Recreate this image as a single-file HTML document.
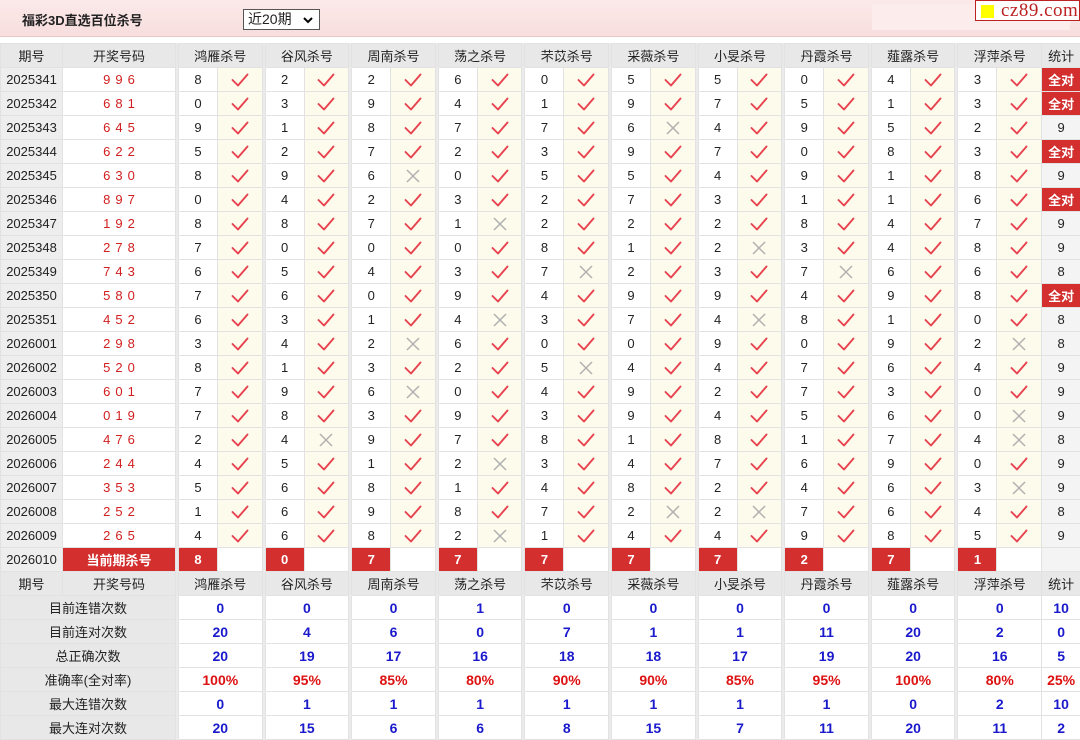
<!DOCTYPE html>
<html><head><meta charset="utf-8">
<style>
*{margin:0;padding:0;box-sizing:border-box}
body{width:1080px;height:740px;background:#fff;font-family:"Liberation Sans","Noto Sans CJK SC",sans-serif;font-size:13px;color:#222;overflow:hidden;position:relative}
.top{position:absolute;left:0;top:0;width:1080px;height:37px;background:linear-gradient(#fbe9e9,#f8dede);border-bottom:1px solid #e6c8c8}
.top .inner{position:absolute;left:872px;top:4px;width:198px;height:26px;background:#fcecec}
.title{position:absolute;left:22px;top:10px;font-weight:bold;font-size:13px;color:#222}
.sel{position:absolute;left:243px;top:9px;width:77px;height:21px;border:1px solid #555;background:#fff;font-size:14px;padding-left:4px;line-height:19px}
.sel svg{position:absolute;right:6px;top:6px}
.logo{position:absolute;left:975px;top:0;width:105px;height:21px;border:1px solid #b22;background:#fff;font-family:"Liberation Serif",serif;font-size:19px;color:#b22;line-height:19px;padding-left:25px;letter-spacing:0.5px}
.logo i{position:absolute;left:5px;top:4px;width:13px;height:13px;background:#ff0}
table{position:absolute;left:0;top:43px;width:1080px;border-collapse:collapse;table-layout:fixed}
td{height:24px;border:1px solid #e2e2e2;text-align:center;padding:0;white-space:nowrap;overflow:hidden}
tr.h td{background:#e8e8e8;font-size:13px}
td.s{background:#ebebeb;border-top-color:#ebebeb;border-bottom-color:#ebebeb}
td.p{background:#eeeeee}
td.k{color:#d21e1e;letter-spacing:5px;padding-left:5px}
td.c{background:#fdfbec}
td.t{background:#f4f4f4}
td.q{background:#d32f2f;color:#fff;font-weight:bold}
td.l{background:#e8e8e8}
td.b{color:#1a1acc;font-weight:bold;font-size:14px}
td.r{color:#dd1111;font-weight:bold;font-size:14px}
svg.v,svg.x{display:block;margin:0 auto}
</style></head><body>
<svg width="0" height="0" style="position:absolute">
<defs>
<symbol id="ck" viewBox="0 0 20 16"><path d="M2.5 8 L8 13.5 L17.5 2.5" fill="none" stroke="#e8424f" stroke-width="1.9" stroke-linecap="round" stroke-linejoin="round"/></symbol>
<symbol id="xx" viewBox="0 0 16 16"><path d="M2 2 L14 14 M14 2 L2 14" fill="none" stroke="#b0b0b0" stroke-width="1.5"/></symbol>
</defs></svg>
<div class="top"><div class="inner"></div></div>
<div class="title">福彩3D直选百位杀号</div>
<div class="sel">近20期<svg width="10" height="8" viewBox="0 0 10 8"><path d="M1 2 L5 6 L9 2" fill="none" stroke="#000" stroke-width="2"/></svg></div>
<div class="logo"><i></i>cz89.com</div>
<table>
<colgroup><col style="width:62px"><col style="width:113px">
<col style="width:3px"><col style="width:39px"><col style="width:44.6px">
<col style="width:3px"><col style="width:39px"><col style="width:44.6px">
<col style="width:3px"><col style="width:39px"><col style="width:44.6px">
<col style="width:3px"><col style="width:39px"><col style="width:44.6px">
<col style="width:3px"><col style="width:39px"><col style="width:44.6px">
<col style="width:3px"><col style="width:39px"><col style="width:44.6px">
<col style="width:3px"><col style="width:39px"><col style="width:44.6px">
<col style="width:3px"><col style="width:39px"><col style="width:44.6px">
<col style="width:3px"><col style="width:39px"><col style="width:44.6px">
<col style="width:3px"><col style="width:39px"><col style="width:44.6px">
<col style="width:39px"></colgroup>
<tr class="h"><td>期号</td><td>开奖号码</td><td class="s"></td><td colspan="2">鸿雁杀号</td><td class="s"></td><td colspan="2">谷风杀号</td><td class="s"></td><td colspan="2">周南杀号</td><td class="s"></td><td colspan="2">荡之杀号</td><td class="s"></td><td colspan="2">芣苡杀号</td><td class="s"></td><td colspan="2">采薇杀号</td><td class="s"></td><td colspan="2">小旻杀号</td><td class="s"></td><td colspan="2">丹霞杀号</td><td class="s"></td><td colspan="2">薤露杀号</td><td class="s"></td><td colspan="2">浮萍杀号</td><td>统计</td></tr>
<tr><td class="p">2025341</td><td class="k">996</td><td class="s"></td><td>8</td><td class="c"><svg class="v" width="20" height="16"><use href="#ck"/></svg></td><td class="s"></td><td>2</td><td class="c"><svg class="v" width="20" height="16"><use href="#ck"/></svg></td><td class="s"></td><td>2</td><td class="c"><svg class="v" width="20" height="16"><use href="#ck"/></svg></td><td class="s"></td><td>6</td><td class="c"><svg class="v" width="20" height="16"><use href="#ck"/></svg></td><td class="s"></td><td>0</td><td class="c"><svg class="v" width="20" height="16"><use href="#ck"/></svg></td><td class="s"></td><td>5</td><td class="c"><svg class="v" width="20" height="16"><use href="#ck"/></svg></td><td class="s"></td><td>5</td><td class="c"><svg class="v" width="20" height="16"><use href="#ck"/></svg></td><td class="s"></td><td>0</td><td class="c"><svg class="v" width="20" height="16"><use href="#ck"/></svg></td><td class="s"></td><td>4</td><td class="c"><svg class="v" width="20" height="16"><use href="#ck"/></svg></td><td class="s"></td><td>3</td><td class="c"><svg class="v" width="20" height="16"><use href="#ck"/></svg></td><td class="q">全对</td></tr>
<tr><td class="p">2025342</td><td class="k">681</td><td class="s"></td><td>0</td><td class="c"><svg class="v" width="20" height="16"><use href="#ck"/></svg></td><td class="s"></td><td>3</td><td class="c"><svg class="v" width="20" height="16"><use href="#ck"/></svg></td><td class="s"></td><td>9</td><td class="c"><svg class="v" width="20" height="16"><use href="#ck"/></svg></td><td class="s"></td><td>4</td><td class="c"><svg class="v" width="20" height="16"><use href="#ck"/></svg></td><td class="s"></td><td>1</td><td class="c"><svg class="v" width="20" height="16"><use href="#ck"/></svg></td><td class="s"></td><td>9</td><td class="c"><svg class="v" width="20" height="16"><use href="#ck"/></svg></td><td class="s"></td><td>7</td><td class="c"><svg class="v" width="20" height="16"><use href="#ck"/></svg></td><td class="s"></td><td>5</td><td class="c"><svg class="v" width="20" height="16"><use href="#ck"/></svg></td><td class="s"></td><td>1</td><td class="c"><svg class="v" width="20" height="16"><use href="#ck"/></svg></td><td class="s"></td><td>3</td><td class="c"><svg class="v" width="20" height="16"><use href="#ck"/></svg></td><td class="q">全对</td></tr>
<tr><td class="p">2025343</td><td class="k">645</td><td class="s"></td><td>9</td><td class="c"><svg class="v" width="20" height="16"><use href="#ck"/></svg></td><td class="s"></td><td>1</td><td class="c"><svg class="v" width="20" height="16"><use href="#ck"/></svg></td><td class="s"></td><td>8</td><td class="c"><svg class="v" width="20" height="16"><use href="#ck"/></svg></td><td class="s"></td><td>7</td><td class="c"><svg class="v" width="20" height="16"><use href="#ck"/></svg></td><td class="s"></td><td>7</td><td class="c"><svg class="v" width="20" height="16"><use href="#ck"/></svg></td><td class="s"></td><td>6</td><td class="c"><svg class="x" width="16" height="16"><use href="#xx"/></svg></td><td class="s"></td><td>4</td><td class="c"><svg class="v" width="20" height="16"><use href="#ck"/></svg></td><td class="s"></td><td>9</td><td class="c"><svg class="v" width="20" height="16"><use href="#ck"/></svg></td><td class="s"></td><td>5</td><td class="c"><svg class="v" width="20" height="16"><use href="#ck"/></svg></td><td class="s"></td><td>2</td><td class="c"><svg class="v" width="20" height="16"><use href="#ck"/></svg></td><td class="t">9</td></tr>
<tr><td class="p">2025344</td><td class="k">622</td><td class="s"></td><td>5</td><td class="c"><svg class="v" width="20" height="16"><use href="#ck"/></svg></td><td class="s"></td><td>2</td><td class="c"><svg class="v" width="20" height="16"><use href="#ck"/></svg></td><td class="s"></td><td>7</td><td class="c"><svg class="v" width="20" height="16"><use href="#ck"/></svg></td><td class="s"></td><td>2</td><td class="c"><svg class="v" width="20" height="16"><use href="#ck"/></svg></td><td class="s"></td><td>3</td><td class="c"><svg class="v" width="20" height="16"><use href="#ck"/></svg></td><td class="s"></td><td>9</td><td class="c"><svg class="v" width="20" height="16"><use href="#ck"/></svg></td><td class="s"></td><td>7</td><td class="c"><svg class="v" width="20" height="16"><use href="#ck"/></svg></td><td class="s"></td><td>0</td><td class="c"><svg class="v" width="20" height="16"><use href="#ck"/></svg></td><td class="s"></td><td>8</td><td class="c"><svg class="v" width="20" height="16"><use href="#ck"/></svg></td><td class="s"></td><td>3</td><td class="c"><svg class="v" width="20" height="16"><use href="#ck"/></svg></td><td class="q">全对</td></tr>
<tr><td class="p">2025345</td><td class="k">630</td><td class="s"></td><td>8</td><td class="c"><svg class="v" width="20" height="16"><use href="#ck"/></svg></td><td class="s"></td><td>9</td><td class="c"><svg class="v" width="20" height="16"><use href="#ck"/></svg></td><td class="s"></td><td>6</td><td class="c"><svg class="x" width="16" height="16"><use href="#xx"/></svg></td><td class="s"></td><td>0</td><td class="c"><svg class="v" width="20" height="16"><use href="#ck"/></svg></td><td class="s"></td><td>5</td><td class="c"><svg class="v" width="20" height="16"><use href="#ck"/></svg></td><td class="s"></td><td>5</td><td class="c"><svg class="v" width="20" height="16"><use href="#ck"/></svg></td><td class="s"></td><td>4</td><td class="c"><svg class="v" width="20" height="16"><use href="#ck"/></svg></td><td class="s"></td><td>9</td><td class="c"><svg class="v" width="20" height="16"><use href="#ck"/></svg></td><td class="s"></td><td>1</td><td class="c"><svg class="v" width="20" height="16"><use href="#ck"/></svg></td><td class="s"></td><td>8</td><td class="c"><svg class="v" width="20" height="16"><use href="#ck"/></svg></td><td class="t">9</td></tr>
<tr><td class="p">2025346</td><td class="k">897</td><td class="s"></td><td>0</td><td class="c"><svg class="v" width="20" height="16"><use href="#ck"/></svg></td><td class="s"></td><td>4</td><td class="c"><svg class="v" width="20" height="16"><use href="#ck"/></svg></td><td class="s"></td><td>2</td><td class="c"><svg class="v" width="20" height="16"><use href="#ck"/></svg></td><td class="s"></td><td>3</td><td class="c"><svg class="v" width="20" height="16"><use href="#ck"/></svg></td><td class="s"></td><td>2</td><td class="c"><svg class="v" width="20" height="16"><use href="#ck"/></svg></td><td class="s"></td><td>7</td><td class="c"><svg class="v" width="20" height="16"><use href="#ck"/></svg></td><td class="s"></td><td>3</td><td class="c"><svg class="v" width="20" height="16"><use href="#ck"/></svg></td><td class="s"></td><td>1</td><td class="c"><svg class="v" width="20" height="16"><use href="#ck"/></svg></td><td class="s"></td><td>1</td><td class="c"><svg class="v" width="20" height="16"><use href="#ck"/></svg></td><td class="s"></td><td>6</td><td class="c"><svg class="v" width="20" height="16"><use href="#ck"/></svg></td><td class="q">全对</td></tr>
<tr><td class="p">2025347</td><td class="k">192</td><td class="s"></td><td>8</td><td class="c"><svg class="v" width="20" height="16"><use href="#ck"/></svg></td><td class="s"></td><td>8</td><td class="c"><svg class="v" width="20" height="16"><use href="#ck"/></svg></td><td class="s"></td><td>7</td><td class="c"><svg class="v" width="20" height="16"><use href="#ck"/></svg></td><td class="s"></td><td>1</td><td class="c"><svg class="x" width="16" height="16"><use href="#xx"/></svg></td><td class="s"></td><td>2</td><td class="c"><svg class="v" width="20" height="16"><use href="#ck"/></svg></td><td class="s"></td><td>2</td><td class="c"><svg class="v" width="20" height="16"><use href="#ck"/></svg></td><td class="s"></td><td>2</td><td class="c"><svg class="v" width="20" height="16"><use href="#ck"/></svg></td><td class="s"></td><td>8</td><td class="c"><svg class="v" width="20" height="16"><use href="#ck"/></svg></td><td class="s"></td><td>4</td><td class="c"><svg class="v" width="20" height="16"><use href="#ck"/></svg></td><td class="s"></td><td>7</td><td class="c"><svg class="v" width="20" height="16"><use href="#ck"/></svg></td><td class="t">9</td></tr>
<tr><td class="p">2025348</td><td class="k">278</td><td class="s"></td><td>7</td><td class="c"><svg class="v" width="20" height="16"><use href="#ck"/></svg></td><td class="s"></td><td>0</td><td class="c"><svg class="v" width="20" height="16"><use href="#ck"/></svg></td><td class="s"></td><td>0</td><td class="c"><svg class="v" width="20" height="16"><use href="#ck"/></svg></td><td class="s"></td><td>0</td><td class="c"><svg class="v" width="20" height="16"><use href="#ck"/></svg></td><td class="s"></td><td>8</td><td class="c"><svg class="v" width="20" height="16"><use href="#ck"/></svg></td><td class="s"></td><td>1</td><td class="c"><svg class="v" width="20" height="16"><use href="#ck"/></svg></td><td class="s"></td><td>2</td><td class="c"><svg class="x" width="16" height="16"><use href="#xx"/></svg></td><td class="s"></td><td>3</td><td class="c"><svg class="v" width="20" height="16"><use href="#ck"/></svg></td><td class="s"></td><td>4</td><td class="c"><svg class="v" width="20" height="16"><use href="#ck"/></svg></td><td class="s"></td><td>8</td><td class="c"><svg class="v" width="20" height="16"><use href="#ck"/></svg></td><td class="t">9</td></tr>
<tr><td class="p">2025349</td><td class="k">743</td><td class="s"></td><td>6</td><td class="c"><svg class="v" width="20" height="16"><use href="#ck"/></svg></td><td class="s"></td><td>5</td><td class="c"><svg class="v" width="20" height="16"><use href="#ck"/></svg></td><td class="s"></td><td>4</td><td class="c"><svg class="v" width="20" height="16"><use href="#ck"/></svg></td><td class="s"></td><td>3</td><td class="c"><svg class="v" width="20" height="16"><use href="#ck"/></svg></td><td class="s"></td><td>7</td><td class="c"><svg class="x" width="16" height="16"><use href="#xx"/></svg></td><td class="s"></td><td>2</td><td class="c"><svg class="v" width="20" height="16"><use href="#ck"/></svg></td><td class="s"></td><td>3</td><td class="c"><svg class="v" width="20" height="16"><use href="#ck"/></svg></td><td class="s"></td><td>7</td><td class="c"><svg class="x" width="16" height="16"><use href="#xx"/></svg></td><td class="s"></td><td>6</td><td class="c"><svg class="v" width="20" height="16"><use href="#ck"/></svg></td><td class="s"></td><td>6</td><td class="c"><svg class="v" width="20" height="16"><use href="#ck"/></svg></td><td class="t">8</td></tr>
<tr><td class="p">2025350</td><td class="k">580</td><td class="s"></td><td>7</td><td class="c"><svg class="v" width="20" height="16"><use href="#ck"/></svg></td><td class="s"></td><td>6</td><td class="c"><svg class="v" width="20" height="16"><use href="#ck"/></svg></td><td class="s"></td><td>0</td><td class="c"><svg class="v" width="20" height="16"><use href="#ck"/></svg></td><td class="s"></td><td>9</td><td class="c"><svg class="v" width="20" height="16"><use href="#ck"/></svg></td><td class="s"></td><td>4</td><td class="c"><svg class="v" width="20" height="16"><use href="#ck"/></svg></td><td class="s"></td><td>9</td><td class="c"><svg class="v" width="20" height="16"><use href="#ck"/></svg></td><td class="s"></td><td>9</td><td class="c"><svg class="v" width="20" height="16"><use href="#ck"/></svg></td><td class="s"></td><td>4</td><td class="c"><svg class="v" width="20" height="16"><use href="#ck"/></svg></td><td class="s"></td><td>9</td><td class="c"><svg class="v" width="20" height="16"><use href="#ck"/></svg></td><td class="s"></td><td>8</td><td class="c"><svg class="v" width="20" height="16"><use href="#ck"/></svg></td><td class="q">全对</td></tr>
<tr><td class="p">2025351</td><td class="k">452</td><td class="s"></td><td>6</td><td class="c"><svg class="v" width="20" height="16"><use href="#ck"/></svg></td><td class="s"></td><td>3</td><td class="c"><svg class="v" width="20" height="16"><use href="#ck"/></svg></td><td class="s"></td><td>1</td><td class="c"><svg class="v" width="20" height="16"><use href="#ck"/></svg></td><td class="s"></td><td>4</td><td class="c"><svg class="x" width="16" height="16"><use href="#xx"/></svg></td><td class="s"></td><td>3</td><td class="c"><svg class="v" width="20" height="16"><use href="#ck"/></svg></td><td class="s"></td><td>7</td><td class="c"><svg class="v" width="20" height="16"><use href="#ck"/></svg></td><td class="s"></td><td>4</td><td class="c"><svg class="x" width="16" height="16"><use href="#xx"/></svg></td><td class="s"></td><td>8</td><td class="c"><svg class="v" width="20" height="16"><use href="#ck"/></svg></td><td class="s"></td><td>1</td><td class="c"><svg class="v" width="20" height="16"><use href="#ck"/></svg></td><td class="s"></td><td>0</td><td class="c"><svg class="v" width="20" height="16"><use href="#ck"/></svg></td><td class="t">8</td></tr>
<tr><td class="p">2026001</td><td class="k">298</td><td class="s"></td><td>3</td><td class="c"><svg class="v" width="20" height="16"><use href="#ck"/></svg></td><td class="s"></td><td>4</td><td class="c"><svg class="v" width="20" height="16"><use href="#ck"/></svg></td><td class="s"></td><td>2</td><td class="c"><svg class="x" width="16" height="16"><use href="#xx"/></svg></td><td class="s"></td><td>6</td><td class="c"><svg class="v" width="20" height="16"><use href="#ck"/></svg></td><td class="s"></td><td>0</td><td class="c"><svg class="v" width="20" height="16"><use href="#ck"/></svg></td><td class="s"></td><td>0</td><td class="c"><svg class="v" width="20" height="16"><use href="#ck"/></svg></td><td class="s"></td><td>9</td><td class="c"><svg class="v" width="20" height="16"><use href="#ck"/></svg></td><td class="s"></td><td>0</td><td class="c"><svg class="v" width="20" height="16"><use href="#ck"/></svg></td><td class="s"></td><td>9</td><td class="c"><svg class="v" width="20" height="16"><use href="#ck"/></svg></td><td class="s"></td><td>2</td><td class="c"><svg class="x" width="16" height="16"><use href="#xx"/></svg></td><td class="t">8</td></tr>
<tr><td class="p">2026002</td><td class="k">520</td><td class="s"></td><td>8</td><td class="c"><svg class="v" width="20" height="16"><use href="#ck"/></svg></td><td class="s"></td><td>1</td><td class="c"><svg class="v" width="20" height="16"><use href="#ck"/></svg></td><td class="s"></td><td>3</td><td class="c"><svg class="v" width="20" height="16"><use href="#ck"/></svg></td><td class="s"></td><td>2</td><td class="c"><svg class="v" width="20" height="16"><use href="#ck"/></svg></td><td class="s"></td><td>5</td><td class="c"><svg class="x" width="16" height="16"><use href="#xx"/></svg></td><td class="s"></td><td>4</td><td class="c"><svg class="v" width="20" height="16"><use href="#ck"/></svg></td><td class="s"></td><td>4</td><td class="c"><svg class="v" width="20" height="16"><use href="#ck"/></svg></td><td class="s"></td><td>7</td><td class="c"><svg class="v" width="20" height="16"><use href="#ck"/></svg></td><td class="s"></td><td>6</td><td class="c"><svg class="v" width="20" height="16"><use href="#ck"/></svg></td><td class="s"></td><td>4</td><td class="c"><svg class="v" width="20" height="16"><use href="#ck"/></svg></td><td class="t">9</td></tr>
<tr><td class="p">2026003</td><td class="k">601</td><td class="s"></td><td>7</td><td class="c"><svg class="v" width="20" height="16"><use href="#ck"/></svg></td><td class="s"></td><td>9</td><td class="c"><svg class="v" width="20" height="16"><use href="#ck"/></svg></td><td class="s"></td><td>6</td><td class="c"><svg class="x" width="16" height="16"><use href="#xx"/></svg></td><td class="s"></td><td>0</td><td class="c"><svg class="v" width="20" height="16"><use href="#ck"/></svg></td><td class="s"></td><td>4</td><td class="c"><svg class="v" width="20" height="16"><use href="#ck"/></svg></td><td class="s"></td><td>9</td><td class="c"><svg class="v" width="20" height="16"><use href="#ck"/></svg></td><td class="s"></td><td>2</td><td class="c"><svg class="v" width="20" height="16"><use href="#ck"/></svg></td><td class="s"></td><td>7</td><td class="c"><svg class="v" width="20" height="16"><use href="#ck"/></svg></td><td class="s"></td><td>3</td><td class="c"><svg class="v" width="20" height="16"><use href="#ck"/></svg></td><td class="s"></td><td>0</td><td class="c"><svg class="v" width="20" height="16"><use href="#ck"/></svg></td><td class="t">9</td></tr>
<tr><td class="p">2026004</td><td class="k">019</td><td class="s"></td><td>7</td><td class="c"><svg class="v" width="20" height="16"><use href="#ck"/></svg></td><td class="s"></td><td>8</td><td class="c"><svg class="v" width="20" height="16"><use href="#ck"/></svg></td><td class="s"></td><td>3</td><td class="c"><svg class="v" width="20" height="16"><use href="#ck"/></svg></td><td class="s"></td><td>9</td><td class="c"><svg class="v" width="20" height="16"><use href="#ck"/></svg></td><td class="s"></td><td>3</td><td class="c"><svg class="v" width="20" height="16"><use href="#ck"/></svg></td><td class="s"></td><td>9</td><td class="c"><svg class="v" width="20" height="16"><use href="#ck"/></svg></td><td class="s"></td><td>4</td><td class="c"><svg class="v" width="20" height="16"><use href="#ck"/></svg></td><td class="s"></td><td>5</td><td class="c"><svg class="v" width="20" height="16"><use href="#ck"/></svg></td><td class="s"></td><td>6</td><td class="c"><svg class="v" width="20" height="16"><use href="#ck"/></svg></td><td class="s"></td><td>0</td><td class="c"><svg class="x" width="16" height="16"><use href="#xx"/></svg></td><td class="t">9</td></tr>
<tr><td class="p">2026005</td><td class="k">476</td><td class="s"></td><td>2</td><td class="c"><svg class="v" width="20" height="16"><use href="#ck"/></svg></td><td class="s"></td><td>4</td><td class="c"><svg class="x" width="16" height="16"><use href="#xx"/></svg></td><td class="s"></td><td>9</td><td class="c"><svg class="v" width="20" height="16"><use href="#ck"/></svg></td><td class="s"></td><td>7</td><td class="c"><svg class="v" width="20" height="16"><use href="#ck"/></svg></td><td class="s"></td><td>8</td><td class="c"><svg class="v" width="20" height="16"><use href="#ck"/></svg></td><td class="s"></td><td>1</td><td class="c"><svg class="v" width="20" height="16"><use href="#ck"/></svg></td><td class="s"></td><td>8</td><td class="c"><svg class="v" width="20" height="16"><use href="#ck"/></svg></td><td class="s"></td><td>1</td><td class="c"><svg class="v" width="20" height="16"><use href="#ck"/></svg></td><td class="s"></td><td>7</td><td class="c"><svg class="v" width="20" height="16"><use href="#ck"/></svg></td><td class="s"></td><td>4</td><td class="c"><svg class="x" width="16" height="16"><use href="#xx"/></svg></td><td class="t">8</td></tr>
<tr><td class="p">2026006</td><td class="k">244</td><td class="s"></td><td>4</td><td class="c"><svg class="v" width="20" height="16"><use href="#ck"/></svg></td><td class="s"></td><td>5</td><td class="c"><svg class="v" width="20" height="16"><use href="#ck"/></svg></td><td class="s"></td><td>1</td><td class="c"><svg class="v" width="20" height="16"><use href="#ck"/></svg></td><td class="s"></td><td>2</td><td class="c"><svg class="x" width="16" height="16"><use href="#xx"/></svg></td><td class="s"></td><td>3</td><td class="c"><svg class="v" width="20" height="16"><use href="#ck"/></svg></td><td class="s"></td><td>4</td><td class="c"><svg class="v" width="20" height="16"><use href="#ck"/></svg></td><td class="s"></td><td>7</td><td class="c"><svg class="v" width="20" height="16"><use href="#ck"/></svg></td><td class="s"></td><td>6</td><td class="c"><svg class="v" width="20" height="16"><use href="#ck"/></svg></td><td class="s"></td><td>9</td><td class="c"><svg class="v" width="20" height="16"><use href="#ck"/></svg></td><td class="s"></td><td>0</td><td class="c"><svg class="v" width="20" height="16"><use href="#ck"/></svg></td><td class="t">9</td></tr>
<tr><td class="p">2026007</td><td class="k">353</td><td class="s"></td><td>5</td><td class="c"><svg class="v" width="20" height="16"><use href="#ck"/></svg></td><td class="s"></td><td>6</td><td class="c"><svg class="v" width="20" height="16"><use href="#ck"/></svg></td><td class="s"></td><td>8</td><td class="c"><svg class="v" width="20" height="16"><use href="#ck"/></svg></td><td class="s"></td><td>1</td><td class="c"><svg class="v" width="20" height="16"><use href="#ck"/></svg></td><td class="s"></td><td>4</td><td class="c"><svg class="v" width="20" height="16"><use href="#ck"/></svg></td><td class="s"></td><td>8</td><td class="c"><svg class="v" width="20" height="16"><use href="#ck"/></svg></td><td class="s"></td><td>2</td><td class="c"><svg class="v" width="20" height="16"><use href="#ck"/></svg></td><td class="s"></td><td>4</td><td class="c"><svg class="v" width="20" height="16"><use href="#ck"/></svg></td><td class="s"></td><td>6</td><td class="c"><svg class="v" width="20" height="16"><use href="#ck"/></svg></td><td class="s"></td><td>3</td><td class="c"><svg class="x" width="16" height="16"><use href="#xx"/></svg></td><td class="t">9</td></tr>
<tr><td class="p">2026008</td><td class="k">252</td><td class="s"></td><td>1</td><td class="c"><svg class="v" width="20" height="16"><use href="#ck"/></svg></td><td class="s"></td><td>6</td><td class="c"><svg class="v" width="20" height="16"><use href="#ck"/></svg></td><td class="s"></td><td>9</td><td class="c"><svg class="v" width="20" height="16"><use href="#ck"/></svg></td><td class="s"></td><td>8</td><td class="c"><svg class="v" width="20" height="16"><use href="#ck"/></svg></td><td class="s"></td><td>7</td><td class="c"><svg class="v" width="20" height="16"><use href="#ck"/></svg></td><td class="s"></td><td>2</td><td class="c"><svg class="x" width="16" height="16"><use href="#xx"/></svg></td><td class="s"></td><td>2</td><td class="c"><svg class="x" width="16" height="16"><use href="#xx"/></svg></td><td class="s"></td><td>7</td><td class="c"><svg class="v" width="20" height="16"><use href="#ck"/></svg></td><td class="s"></td><td>6</td><td class="c"><svg class="v" width="20" height="16"><use href="#ck"/></svg></td><td class="s"></td><td>4</td><td class="c"><svg class="v" width="20" height="16"><use href="#ck"/></svg></td><td class="t">8</td></tr>
<tr><td class="p">2026009</td><td class="k">265</td><td class="s"></td><td>4</td><td class="c"><svg class="v" width="20" height="16"><use href="#ck"/></svg></td><td class="s"></td><td>6</td><td class="c"><svg class="v" width="20" height="16"><use href="#ck"/></svg></td><td class="s"></td><td>8</td><td class="c"><svg class="v" width="20" height="16"><use href="#ck"/></svg></td><td class="s"></td><td>2</td><td class="c"><svg class="x" width="16" height="16"><use href="#xx"/></svg></td><td class="s"></td><td>1</td><td class="c"><svg class="v" width="20" height="16"><use href="#ck"/></svg></td><td class="s"></td><td>4</td><td class="c"><svg class="v" width="20" height="16"><use href="#ck"/></svg></td><td class="s"></td><td>4</td><td class="c"><svg class="v" width="20" height="16"><use href="#ck"/></svg></td><td class="s"></td><td>9</td><td class="c"><svg class="v" width="20" height="16"><use href="#ck"/></svg></td><td class="s"></td><td>8</td><td class="c"><svg class="v" width="20" height="16"><use href="#ck"/></svg></td><td class="s"></td><td>5</td><td class="c"><svg class="v" width="20" height="16"><use href="#ck"/></svg></td><td class="t">9</td></tr>
<tr><td class="p">2026010</td><td class="q">当前期杀号</td><td class="s"></td><td class="q">8</td><td></td><td class="s"></td><td class="q">0</td><td></td><td class="s"></td><td class="q">7</td><td></td><td class="s"></td><td class="q">7</td><td></td><td class="s"></td><td class="q">7</td><td></td><td class="s"></td><td class="q">7</td><td></td><td class="s"></td><td class="q">7</td><td></td><td class="s"></td><td class="q">2</td><td></td><td class="s"></td><td class="q">7</td><td></td><td class="s"></td><td class="q">1</td><td></td><td class="t"></td></tr>
<tr class="h"><td>期号</td><td>开奖号码</td><td class="s"></td><td colspan="2">鸿雁杀号</td><td class="s"></td><td colspan="2">谷风杀号</td><td class="s"></td><td colspan="2">周南杀号</td><td class="s"></td><td colspan="2">荡之杀号</td><td class="s"></td><td colspan="2">芣苡杀号</td><td class="s"></td><td colspan="2">采薇杀号</td><td class="s"></td><td colspan="2">小旻杀号</td><td class="s"></td><td colspan="2">丹霞杀号</td><td class="s"></td><td colspan="2">薤露杀号</td><td class="s"></td><td colspan="2">浮萍杀号</td><td>统计</td></tr>
<tr><td class="l" colspan="2">目前连错次数</td><td class="s"></td><td class="b" colspan="2">0</td><td class="s"></td><td class="b" colspan="2">0</td><td class="s"></td><td class="b" colspan="2">0</td><td class="s"></td><td class="b" colspan="2">1</td><td class="s"></td><td class="b" colspan="2">0</td><td class="s"></td><td class="b" colspan="2">0</td><td class="s"></td><td class="b" colspan="2">0</td><td class="s"></td><td class="b" colspan="2">0</td><td class="s"></td><td class="b" colspan="2">0</td><td class="s"></td><td class="b" colspan="2">0</td><td class="b">10</td></tr>
<tr><td class="l" colspan="2">目前连对次数</td><td class="s"></td><td class="b" colspan="2">20</td><td class="s"></td><td class="b" colspan="2">4</td><td class="s"></td><td class="b" colspan="2">6</td><td class="s"></td><td class="b" colspan="2">0</td><td class="s"></td><td class="b" colspan="2">7</td><td class="s"></td><td class="b" colspan="2">1</td><td class="s"></td><td class="b" colspan="2">1</td><td class="s"></td><td class="b" colspan="2">11</td><td class="s"></td><td class="b" colspan="2">20</td><td class="s"></td><td class="b" colspan="2">2</td><td class="b">0</td></tr>
<tr><td class="l" colspan="2">总正确次数</td><td class="s"></td><td class="b" colspan="2">20</td><td class="s"></td><td class="b" colspan="2">19</td><td class="s"></td><td class="b" colspan="2">17</td><td class="s"></td><td class="b" colspan="2">16</td><td class="s"></td><td class="b" colspan="2">18</td><td class="s"></td><td class="b" colspan="2">18</td><td class="s"></td><td class="b" colspan="2">17</td><td class="s"></td><td class="b" colspan="2">19</td><td class="s"></td><td class="b" colspan="2">20</td><td class="s"></td><td class="b" colspan="2">16</td><td class="b">5</td></tr>
<tr><td class="l" colspan="2">准确率(全对率)</td><td class="s"></td><td class="r" colspan="2">100%</td><td class="s"></td><td class="r" colspan="2">95%</td><td class="s"></td><td class="r" colspan="2">85%</td><td class="s"></td><td class="r" colspan="2">80%</td><td class="s"></td><td class="r" colspan="2">90%</td><td class="s"></td><td class="r" colspan="2">90%</td><td class="s"></td><td class="r" colspan="2">85%</td><td class="s"></td><td class="r" colspan="2">95%</td><td class="s"></td><td class="r" colspan="2">100%</td><td class="s"></td><td class="r" colspan="2">80%</td><td class="r">25%</td></tr>
<tr><td class="l" colspan="2">最大连错次数</td><td class="s"></td><td class="b" colspan="2">0</td><td class="s"></td><td class="b" colspan="2">1</td><td class="s"></td><td class="b" colspan="2">1</td><td class="s"></td><td class="b" colspan="2">1</td><td class="s"></td><td class="b" colspan="2">1</td><td class="s"></td><td class="b" colspan="2">1</td><td class="s"></td><td class="b" colspan="2">1</td><td class="s"></td><td class="b" colspan="2">1</td><td class="s"></td><td class="b" colspan="2">0</td><td class="s"></td><td class="b" colspan="2">2</td><td class="b">10</td></tr>
<tr><td class="l" colspan="2">最大连对次数</td><td class="s"></td><td class="b" colspan="2">20</td><td class="s"></td><td class="b" colspan="2">15</td><td class="s"></td><td class="b" colspan="2">6</td><td class="s"></td><td class="b" colspan="2">6</td><td class="s"></td><td class="b" colspan="2">8</td><td class="s"></td><td class="b" colspan="2">15</td><td class="s"></td><td class="b" colspan="2">7</td><td class="s"></td><td class="b" colspan="2">11</td><td class="s"></td><td class="b" colspan="2">20</td><td class="s"></td><td class="b" colspan="2">11</td><td class="b">2</td></tr>
</table>
</body></html>
